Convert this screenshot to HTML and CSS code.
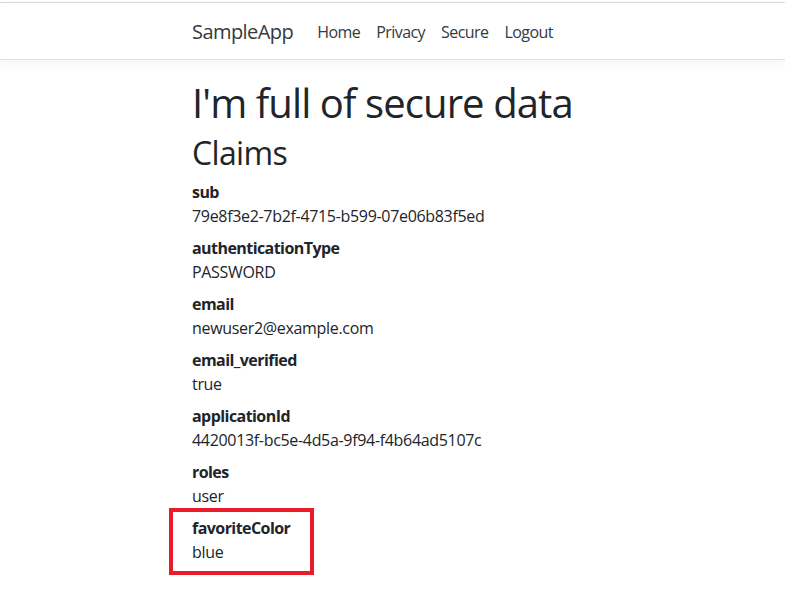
FILE: index.html
```html
<!DOCTYPE html>
<html lang="en">
<head>
<meta charset="utf-8">
<title>Secure - SampleApp</title>
<link rel="stylesheet" href="styles.css">
</head>
<body>
<div class="topline"></div>
<header class="site-header">
  <nav class="navbar">
    <div class="container nav-inner">
      <a class="brand" href="#">SampleApp</a>
      <ul class="nav-list">
        <li><a class="nav-link" href="#">Home</a></li>
        <li><a class="nav-link" href="#">Privacy</a></li>
        <li><a class="nav-link" href="#">Secure</a></li>
        <li><a class="nav-link" href="#">Logout</a></li>
      </ul>
    </div>
  </nav>
</header>
<main class="container content">
  <h1 class="title">I'm full of secure data</h1>
  <h2 class="subtitle">Claims</h2>
  <dl class="claims">
    <div class="claim"><dt>sub</dt><dd>79e8f3e2-7b2f-4715-b599-07e06b83f5ed</dd></div>
    <div class="claim"><dt>authenticationType</dt><dd>PASSWORD</dd></div>
    <div class="claim"><dt>email</dt><dd>newuser2@example.com</dd></div>
    <div class="claim"><dt>email_verified</dt><dd>true</dd></div>
    <div class="claim"><dt>applicationId</dt><dd>4420013f-bc5e-4d5a-9f94-f4b64ad5107c</dd></div>
    <div class="claim"><dt>roles</dt><dd>user</dd></div>
    <div class="claim highlighted"><dt>favoriteColor</dt><dd>blue</dd><span class="highlight-box"></span></div>
  </dl>
</main>
</body>
</html>
```

FILE: styles.css
```css
html, body {
  margin: 0;
  padding: 0;
  background: #fff;
}
body {
  font-family: "Open Sans", "Noto Sans", "Liberation Sans", sans-serif;
  font-size: 16px;
  line-height: 1.5;
  color: #212529;
  letter-spacing: -0.02em;
}
.topline {
  height: 2px;
  border-bottom: 1px solid #dcdcdc;
}
.site-header {
  background: #fff;
  border-bottom: 1px solid #dee2e6;
  box-shadow: 0 4px 12px rgba(0, 0, 0, 0.05);
  margin-bottom: 16px;
}
.navbar {
  padding: 9px 0 7px;
}
.container {
  padding-left: 192px;
  padding-right: 16px;
}
.content {
  padding-top: 2px;
}
.nav-inner {
  display: flex;
  align-items: center;
}
.brand {
  font-size: 20px;
  line-height: 30px;
  padding: 5px 0;
  margin-right: 16px;
  color: #343a40;
  text-decoration: none;
  letter-spacing: -0.028em;
}
.nav-list {
  display: flex;
  list-style: none;
  margin: 0;
  padding: 0;
}
.nav-link {
  display: block;
  padding: 8px 8px;
  color: #343a40;
  text-decoration: none;
  letter-spacing: -0.035em;
}
.title {
  font-size: 40px;
  font-weight: 400;
  line-height: 1.2;
  margin: 0 0 7px;
  padding-top: 1px;
  letter-spacing: -0.0225em;
}
.subtitle {
  font-size: 32px;
  font-weight: 400;
  line-height: 1.2;
  margin: 0 0 8px;
  letter-spacing: -0.02em;
}
.claims {
  margin: 0 0 16px;
}
.claim {
  position: relative;
}
.claims dt {
  font-weight: 700;
  letter-spacing: -0.035em;
}
.claims dd {
  margin: 0 0 8px;
}
.highlight-box {
  position: absolute;
  left: -23px;
  top: -8px;
  width: 137px;
  height: 59px;
  border: 4px solid #e81c2b;
}
```
